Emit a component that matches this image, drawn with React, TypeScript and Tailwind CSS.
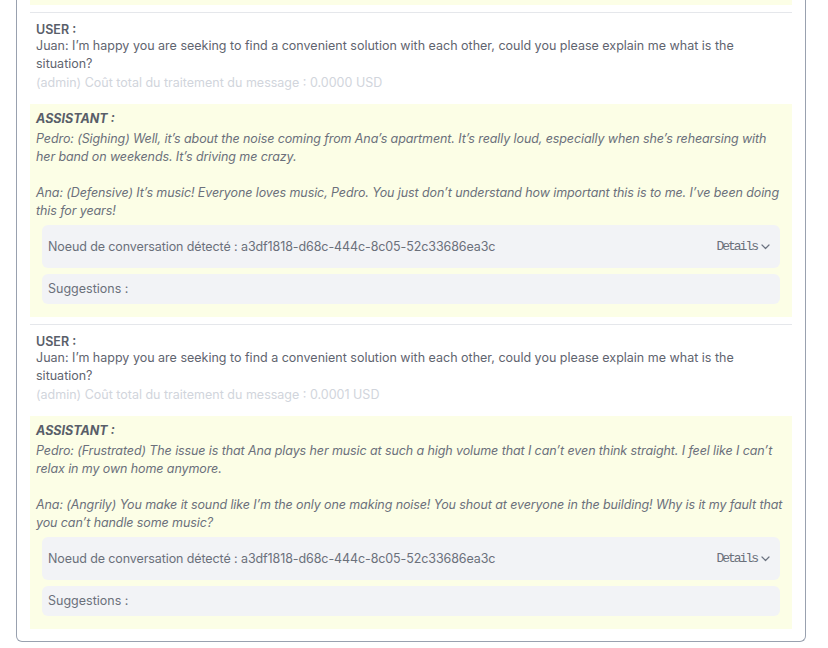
import React from "react";

interface Exchange {
  user: string;
  cost: string;
  assistant: string;
  node: string;
}

const exchanges: Exchange[] = [
  {
    user: "Juan: I’m happy you are seeking to find a convenient solution with each other, could you please explain me what is the situation?",
    cost: "0.0000",
    assistant:
      "Pedro: (Sighing) Well, it’s about the noise coming from Ana’s apartment. It’s really loud, especially when she’s rehearsing with her band on weekends. It’s driving me crazy.\n\nAna: (Defensive) It’s music! Everyone loves music, Pedro. You just don’t understand how important this is to me. I’ve been doing this for years!",
    node: "a3df1818-d68c-444c-8c05-52c33686ea3c",
  },
  {
    user: "Juan: I’m happy you are seeking to find a convenient solution with each other, could you please explain me what is the situation?",
    cost: "0.0001",
    assistant:
      "Pedro: (Frustrated) The issue is that Ana plays her music at such a high volume that I can’t even think straight. I feel like I can’t relax in my own home anymore.\n\nAna: (Angrily) You make it sound like I’m the only one making noise! You shout at everyone in the building! Why is it my fault that you can’t handle some music?",
    node: "a3df1818-d68c-444c-8c05-52c33686ea3c",
  },
];

const ChevronDown = () => (
  <svg width="9" height="6" viewBox="0 0 9 6" fill="none" className="ml-[4px]">
    <path d="M1 1l3.5 3.5L8 1" stroke="#6b7280" strokeWidth="1.2" strokeLinecap="round" strokeLinejoin="round" />
  </svg>
);

const ExchangeBlock: React.FC<{ item: Exchange }> = ({ item }) => (
  <>
    <div className="h-px bg-gray-200 mt-[7px]" />
    <div className="px-1.5 pt-[10px] pb-[12px] leading-[18px]">
      <div className="font-semibold text-[#595e69] leading-[14px]">USER :</div>
      <div className="text-[#5f646f]">{item.user}</div>
      <div className="text-gray-300 mt-px">
        (admin) Coût total du traitement du message : {item.cost} USD
      </div>
    </div>
    <div className="bg-[#fcfee6] px-1.5 pt-1.5 pb-[13px] leading-[18px]">
      <div className="font-bold italic text-[#595e69]">ASSISTANT :</div>
      <div className="italic text-[#6b707b] whitespace-pre-line mt-[2px] tracking-[-0.1px]">
        {item.assistant}
      </div>
      <div className="mx-1.5 mt-[5px] h-[43px] px-1.5 bg-[#f2f3f6] rounded-md flex items-center justify-between text-[#6b707b]">
        <span className="tracking-[-0.1px]">Noeud de conversation détecté : {item.node}</span>
        <button className="flex items-center text-[#6b707b] font-['Liberation_Mono',monospace] text-[13px] tracking-[-2px] pr-[4px]">
          Details
          <ChevronDown />
        </button>
      </div>
      <div className="mx-1.5 mt-1.5 h-[30px] px-1.5 bg-[#f2f3f6] rounded-md flex items-center text-[#6b707b]">
        Suggestions :
      </div>
    </div>
  </>
);

export default function App() {
  return (
    <div className="min-h-[648px] bg-white font-['Inter',sans-serif] text-[12.5px]">
      <div className="ml-4 w-[790px] border-x border-b border-gray-400 rounded-b-md px-[13px] pb-3">
        <div className="h-[5px] bg-[#fcfee6]" />
        {exchanges.map((item, i) => (
          <ExchangeBlock key={i} item={item} />
        ))}
      </div>
    </div>
  );
}
